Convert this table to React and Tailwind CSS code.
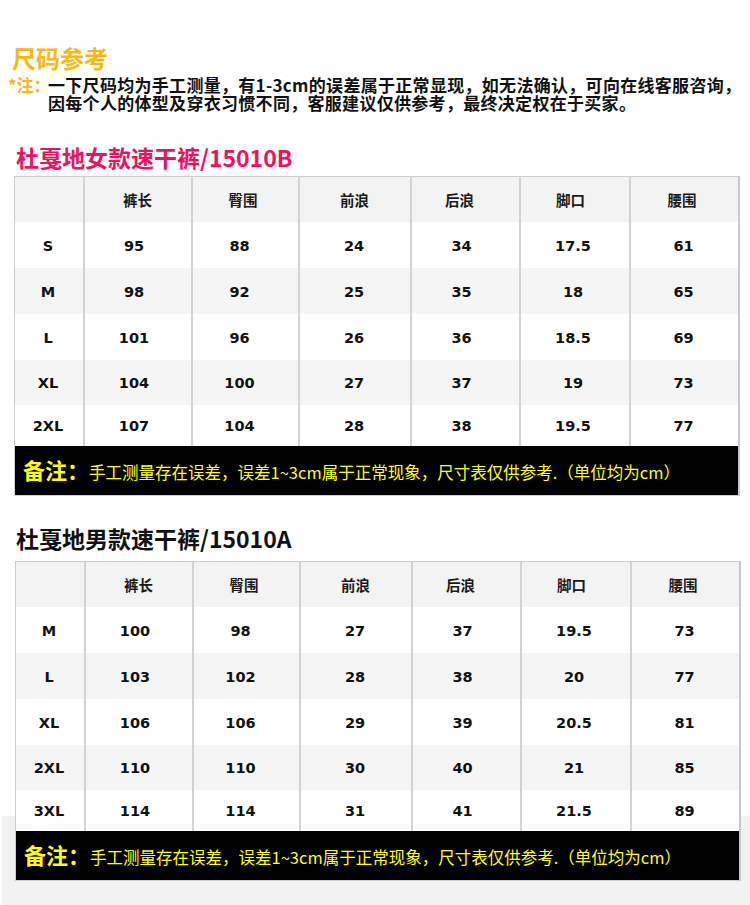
import React from "react";

const COLS = "grid grid-cols-[68px_108px_107px_112px_109px_110px_109px]";
const HEAD = ["", "裤长", "臀围", "前浪", "后浪", "脚口", "腰围"];

const HEAD_PAD = ["", "pr-[1px]", "pr-[5px]", "pr-[1px]", "pr-[12px]", "pr-[9px]", "pr-[5px]"];
const DATA_PAD = ["pr-[2px]", "pr-[8px]", "pr-[12px]", "pr-[2px]", "pr-[8px]", "pr-[4px]", "pr-[2px]"];

const WOMEN = [
  ["S", "95", "88", "24", "34", "17.5", "61"],
  ["M", "98", "92", "25", "35", "18", "65"],
  ["L", "101", "96", "26", "36", "18.5", "69"],
  ["XL", "104", "100", "27", "37", "19", "73"],
  ["2XL", "107", "104", "28", "38", "19.5", "77"],
];

const MEN = [
  ["M", "100", "98", "27", "37", "19.5", "73"],
  ["L", "103", "102", "28", "38", "20", "77"],
  ["XL", "106", "106", "29", "39", "20.5", "81"],
  ["2XL", "110", "110", "30", "40", "21", "85"],
  ["3XL", "114", "114", "31", "41", "21.5", "89"],
];

const HEIGHTS = ["h-[46px]", "h-[46px]", "h-[46px]", "h-[45px]", "h-[41px]"];

function Row({ cells, className, header }) {
  return (
    <div className={`${COLS} ${className}`}>
      {cells.map((c, i) => (
        <div
          key={i}
          className={`flex items-center justify-center ${
            i > 0 ? "border-l-2 border-[#d3d3d3]" : ""
          } ${
            header
              ? `${HEAD_PAD[i]} font-['Noto_Sans_CJK_SC',sans-serif] text-[14.5px] font-bold text-[#1a1a1a]`
              : `${DATA_PAD[i]} pt-[3px] font-['DejaVu_Sans',sans-serif] text-[14.5px] font-bold text-[#111]`
          }`}
        >
          {c}
        </div>
      ))}
    </div>
  );
}

function Table({ rows, className }) {
  return (
    <div
      className={`w-[726px] border-t border-l border-b border-r-2 border-t-[#cdcdcd] border-l-[#cdcdcd] border-b-[#cfcfcf] border-r-[#c8c8c8] ${className}`}
    >
      <Row cells={HEAD} header className="h-[45px] bg-[#f3f3f3]" />
      {rows.map((r, i) => (
        <Row
          key={i}
          cells={r}
          className={`${HEIGHTS[i]} ${i % 2 === 1 ? "bg-[#f5f5f5]" : "bg-white"}`}
        />
      ))}
      <div className="h-[49px] bg-black flex items-baseline pl-[8px] pt-[10px] font-['Noto_Sans_CJK_SC',sans-serif] text-[#ffff00]">
        <span className="text-[22px] font-bold leading-[26px]">备注：</span>
        <span className="text-[16.5px] leading-[26px] font-normal">
          手工测量存在误差，误差1~3cm属于正常现象，尺寸表仅供参考.（单位均为cm）
        </span>
      </div>
    </div>
  );
}

export default function App() {
  return (
    <div className="w-[750px] h-[905px] bg-white flex overflow-hidden">
      <div className="ml-[2px] flex-1 flex flex-col bg-[linear-gradient(to_bottom,#ffffff_816px,#f2f2f2_816px)] font-['Noto_Sans_CJK_SC',sans-serif]">
        <div className="mt-[45px] ml-[10px] h-[26px] text-[24px] leading-[26px] font-bold text-[#fbb713]">
          尺码参考
        </div>
        <div className="mt-[5px] flex text-[17px] leading-[18px] font-bold">
          <div className="ml-[6px] w-[40px] shrink-0 whitespace-nowrap text-[#fbb713]">*注：</div>
          <div className="text-[#111] tracking-[0.3px]">
            <div className="whitespace-nowrap h-[18px]">
              一下尺码均为手工测量，有1-3cm的误差属于正常显现，如无法确认，可向在线客服咨询，
            </div>
            <div className="whitespace-nowrap h-[18px]">
              因每个人的体型及穿衣习惯不同，客服建议仅供参考，最终决定权在于买家。
            </div>
          </div>
        </div>
        <div className="mt-[33px] ml-[14px] h-[24px] text-[23px] leading-[24px] font-bold text-[#f2105c] whitespace-nowrap">
          杜戛地女款速干裤/15010B
        </div>
        <Table rows={WOMEN} className="mt-[7px] ml-[12px]" />
        <div className="mt-[30px] ml-[14px] h-[24px] text-[23px] leading-[24px] font-bold text-[#111] whitespace-nowrap">
          杜戛地男款速干裤/15010A
        </div>
        <Table rows={MEN} className="mt-[11px] ml-[13px]" />
      </div>
    </div>
  );
}
